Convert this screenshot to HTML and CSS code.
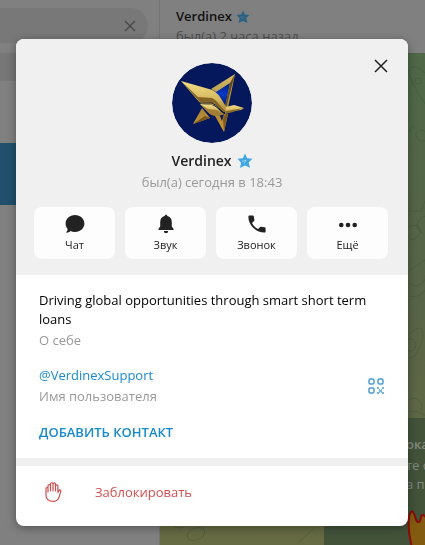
FILE: index.html
```html
<!DOCTYPE html>
<html lang="ru">
<head>
  <meta charset="UTF-8" />
  <meta name="viewport" content="width=device-width, initial-scale=1" />
  <title>Verdinex</title>
  <link rel="stylesheet" href="styles.css">
</head>
<body>

  <div class="app">
    <div class="sidebar">
      <div class="search">
        <svg width="12" height="12" viewBox="0 0 12 12"><path d="M1 1l10 10M11 1L1 11" stroke="#4b4b4b" stroke-width="1.5" /></svg>
      </div>
      <div class="filter"></div>
      <div class="selected-chat"></div>
    </div>
    <div class="chat">
      <div class="chat-header">
        <div class="chat-name">Verdinex
          <svg class="star" width="14" height="14" viewBox="0 0 16 16"><path d="M8 .6l2.1 4.6 5.3.5-3.800 3.700 1.500 5.400L8 12.500l-4.900 2.400L4 9.700.6 5.800l5.300-.6z" fill="#2a6384" /><path d="M5 8.500l4-1-2 3" fill="none" stroke="#5f7680" stroke-width=".8" /></svg>
        </div>
        <div class="chat-status">был(а) 2 часа назад</div>
      </div>
      <div class="wallpaper">
        <svg class="doodles" width="266" height="492" viewBox="0 0 266 492" fill="none" stroke="#3f5539" stroke-opacity=".5">
          <path d="M266 52c-10-14-14-24-17-31-2-6 6-10 11-5l6 5M266 80c-4-5-11-3-10 3 0 4 5 5 10 5M249 79c3-4 2-8 6-4M249 158h12l5-12M249 174c8-5 14 2 10 8s-9 5-10 3M266 163c-10 2-12 14-3 17M249 217c6-2 14-10 16-10l1 8" />
          <circle cx="258" cy="28" r="3" />
          <path d="M249 230c8 6 15 1 17-6M249 243c7 2 13-1 17-7M249 282c3-4 10-10 13-5 3 8-2 16-5 23-2 4-6 5-8 4" />
          <circle cx="250" cy="292" r="6" />
          <path d="M249 347c9-5 15 3 12 10M249 359c7-1 11 0 17 4" />
          <ellipse cx="36" cy="481" rx="9" ry="6" transform="rotate(-20 36 481)" />
          <path d="M13 472c4 5 12 3 14-2M58 468c0 4 6 4 7-1M139 489l14-13" />
        </svg>
        <div class="empty-chat">
          <p class="empty-title">ока</p>
          <p class="empty-text">те с<br>а пр</p>
          <svg class="flame" width="24" height="38" viewBox="0 0 24 38"><path d="M6 40C5 30 1 19 3 8c0-3 2-8 4-6 3 4 2 9 5 10 4 1 1-7 5-7 4 1 6 8 9 15v20z" fill="#835b10" stroke="#8b0b08" stroke-width="2" /></svg>
        </div>
      </div>
    </div>
  </div>

  <div class="overlay">
    <div class="modal" role="dialog" aria-labelledby="name">
      <div class="profile">
        <button class="close" aria-label="Закрыть">
          <svg width="14" height="14" viewBox="0 0 14 14"><path d="M1 1l12 12M13 1L1 13" stroke="#222" stroke-width="1.5" /></svg>
        </button>

        <svg class="avatar" width="80" height="80" viewBox="0 0 80 80">
          <defs>
            <linearGradient id="gold" x1="0" y1="0" x2="0" y2="1">
              <stop offset="0" stop-color="#f3df88" />
              <stop offset=".6" stop-color="#d3b75c" />
              <stop offset="1" stop-color="#a88334" />
            </linearGradient>
            <linearGradient id="frame" gradientUnits="userSpaceOnUse" x1="0" y1="11" x2="0" y2="68">
              <stop offset="0" stop-color="#d6be6c" />
              <stop offset=".6" stop-color="#a58238" />
              <stop offset="1" stop-color="#cf982f" />
            </linearGradient>
            <linearGradient id="blue" x1="0" y1="0" x2="0" y2="1">
              <stop offset="0" stop-color="#041a6a" />
              <stop offset=".5" stop-color="#0338c8" />
              <stop offset="1" stop-color="#041a6a" />
            </linearGradient>
          </defs>
          <circle cx="40" cy="40" r="40" fill="#04185b" />
          <!-- star frame -->
          <path d="M59 18L44 29l9 15z" fill="url(#blue)" />
          <path d="M63 11L39 26l5 3 14-9-5 24 3 1z" fill="url(#frame)" />
          <path d="M63 11l-5 9-5 24 1 1z" fill="#634a1c" />
          <path d="M30 45l-9 16 17-6z" fill="url(#frame)" />
          <path d="M21 61l12-8 5 2z" fill="#76561d" />
          <path d="M43 53h5l2 5 2-7h4l-4 18z" fill="url(#frame)" />
          <path d="M51 56l2-5 3 0-4 18z" fill="#7d5b20" />
          <!-- wing and head -->
          <path d="M9 18l28 8c7 2 10 6 13 11 2 4 4 7 7 9l-5 3-10-7-13-1z" fill="url(#gold)" />
          <path d="M9 18l17 16 14 1c5 2 8 8 13 13l-1 1-10-9-14-1z" fill="#846526" />
          <path d="M28 41l12 1c6 2 8 7 12 9-4 2-9 3-14 0z" fill="url(#gold)" />
          <path d="M28 41l8 5 9 1 7 4c-4 2-9 3-14 0z" fill="#a27f34" />
          <path d="M27 40h13c5 2 8 7 12 10" fill="none" stroke="#171b2c" />
          <path d="M54 44l8-2 10 3-3 2-8 1-8 3z" fill="url(#gold)" />
          <path d="M54 48l18-3-11 4-8 2z" fill="#8d6c2a" />
        </svg>

        <h1 class="name" id="name">Verdinex
          <svg class="star" width="16" height="16" viewBox="0 0 16 16"><path d="M8 .6l2.100 4.600 5.300.5-3.800 3.700 1.500 5.400L8 12.500l-4.900 2.400L4 9.700.6 5.800l5.300-.6z" fill="#40a7e3" /><path d="M5 8.300l4-1-2 3" fill="none" stroke="#a9d8f2" stroke-width=".8" /></svg>
        </h1>
        <p class="status">был(а) сегодня в 18:43</p>

        <div class="actions">
          <button class="action">
            <svg width="20" height="20" viewBox="0 0 20 20"><path d="M10 1c5.300 0 9.400 3.800 9.400 8.500S15.300 18 10 18c-1.700 0-3.200-.4-4.500-1-1 1-2.400 1.700-3.900 1.800-.4 0-.5-.4-.2-.7.8-.9 1.200-2 1.200-3.200C1.300 13.400.6 11.500.6 9.500.6 4.800 4.700 1 10 1z" fill="#222" /></svg>
            Чат
          </button>
          <button class="action">
            <svg width="20" height="20" viewBox="0 0 20 20"><path d="M10 .7c.8 0 1.300.6 1.300 1.400 2.800.6 4.500 2.900 4.500 5.900v4.500l1.700 2.300v1.200h-15v-1.200l1.700-2.300V8c0-3 1.700-5.300 4.500-5.900 0-.8.5-1.400 1.300-1.400zM7.800 17h4.400a2.200 2.200 0 0 1-4.400 0z" fill="#222" /></svg>
            Звук
          </button>
          <button class="action">
            <svg width="20" height="20" viewBox="0 0 20 20"><path d="M2.500 1.500h3.200c.6 0 1 .4 1.100 1l.6 3.300c.1.400 0 .8-.3 1.100L5 9c1.400 2.700 3.500 4.800 6.100 6.100l2.100-2.100c.3-.3.700-.4 1.100-.3l3.300.6c.6.1 1 .5 1 1.100v3c0 .7-.5 1.200-1.200 1.200C8.600 18.300 1.400 11 1.400 2.700c0-.7.4-1.200 1.100-1.200z" fill="#222" /></svg>
            Звонок
          </button>
          <button class="action">
            <svg width="20" height="20" viewBox="0 0 20 20" fill="#222"><circle cx="3.300" cy="11" r="2.300" /><circle cx="10" cy="11" r="2.300" /><circle cx="16.700" cy="11" r="2.300" /></svg>
            Ещё
          </button>
        </div>
      </div>

      <div class="info">
        <p class="value">Driving global opportunities through smart short term loans</p>
        <p class="label">О себе</p>

        <div class="username">
          <div>
            <a class="value" href="#">@VerdinexSupport</a>
            <p class="label">Имя пользователя</p>
          </div>
          <button class="qr" aria-label="QR-код">
            <svg width="16" height="16" viewBox="0 0 16 16" fill="none" stroke="#4a9bd2" stroke-width="1.500"><rect x="1" y="1" width="5" height="5" rx="1.500" /><rect x="10" y="1" width="5" height="5" rx="1.500" /><rect x="1" y="10" width="5" height="5" rx="1.500" /><path d="M9 10h2M14 10h2M11 12h1M13 12h1M12 13h1M9 15h2M14 15h2M11 14h1M13 14h1" /></svg>
          </button>
        </div>

        <a class="add-contact" href="#">ДОБАВИТЬ КОНТАКТ</a>
      </div>

      <button class="block">
        <svg width="20" height="20" viewBox="0 0 20 20" fill="none" stroke="#d14e4e" stroke-width="1.200" stroke-linecap="round" stroke-linejoin="round"><path d="M5 10V3.800a1.250 1.250 0 0 1 2.500 0V9M7.500 9V2a1.250 1.250 0 0 1 2.500 0v7M10 9V2.200a1.250 1.250 0 0 1 2.500 0V9M12.500 9V4a1.200 1.200 0 0 1 2.400 0v6.600l1-2c.6-1.100 2.300-.6 1.900.8l-1.500 5c-.8 3-2.600 5-5.700 5C6 19.400 3 17.500 3 13V6.500A1 1 0 0 1 5 6.500" /></svg>
        Заблокировать
      </button>
    </div>
  </div>

</body>
</html>
```
FILE: styles.css
```css
* {
  box-sizing: border-box;
}

body {
  margin: 0;
  font-family: "Open Sans", "Noto Sans", sans-serif;
  font-size: 13px;
  line-height: 19px;
  color: #000;
}

p, h1 {
  margin: 0;
}

a {
  text-decoration: none;
}

button {
  border: none;
  padding: 0;
  background: none;
  font: inherit;
  cursor: pointer;
}

svg {
  display: block;
}

/* dimmed app behind the modal */
.app {
  display: flex;
  height: 100vh;
  overflow: hidden;
  background: #808080;
}

.sidebar {
  flex: 0 0 160px;
  padding-top: 8px;
  border-right: 1px solid #747474;
}

.search {
  display: flex;
  align-items: center;
  justify-content: flex-end;
  height: 35px;
  margin-right: 11px;
  padding-right: 12px;
  border-radius: 0 18px 18px 0;
  background: #787878;
}

.filter {
  height: 28px;
  margin: 10px 11px 62px 0;
  background: #767676;
}

.selected-chat {
  height: 62px;
  background: #20506e;
}

.chat {
  flex: 1;
  min-width: 0;
  display: flex;
  flex-direction: column;
}

.chat-header {
  height: 53px;
  padding: 7px 16px;
  overflow: hidden;
}

.chat-name {
  display: flex;
  align-items: center;
  gap: 4px;
  font-weight: 600;
  color: #111;
}

.chat-status {
  margin-top: 1px;
  color: #4d4d4d;
}

.wallpaper {
  position: relative;
  flex: 1;
  display: flex;
  align-items: flex-end;
  justify-content: flex-end;
  overflow: hidden;
  background: linear-gradient(#4f6848, #586447 50%, #666b43);
}

.doodles {
  position: absolute;
  top: 0;
  left: 0;
}

.empty-chat {
  width: 101px;
  height: 127px;
  padding: 17px 0 0 82px;
  overflow: hidden;
  white-space: nowrap;
  background: #42533a;
  color: #84897f;
}

.empty-title {
  font-weight: 600;
  margin-bottom: 2px;
}

.flame {
  margin-top: 16px;
}

/* profile modal */
.overlay {
  position: fixed;
  inset: 0;
  padding: 39px 17px 19px 16px;
}

.modal {
  max-width: 392px;
  margin: 0 auto;
  overflow: hidden;
  border-radius: 8px;
  background: #fff;
  box-shadow: 0 2px 10px rgba(0, 0, 0, 0.35);
}

.profile {
  position: relative;
  padding: 24px 18px 16px;
  background: #f0f0f0;
  text-align: center;
}

.close {
  position: absolute;
  top: 20px;
  right: 20px;
}

.avatar {
  margin: 0 auto 8px;
  border-radius: 50%;
}

.name {
  display: flex;
  align-items: center;
  justify-content: center;
  gap: 5px;
  font-size: 14px;
  line-height: 20px;
  font-weight: 600;
  color: #222;
}

.status {
  margin: 2px 0 15px;
  color: #999;
}

.actions {
  display: grid;
  grid-template-columns: repeat(4, 1fr);
  gap: 10px;
  margin-right: 2px;
}

.action {
  display: flex;
  flex-direction: column;
  align-items: center;
  gap: 1px;
  height: 52px;
  padding-top: 7px;
  border-radius: 8px;
  background: #fdfdfd;
  font-size: 11px;
  line-height: 20px;
  color: #222;
}

.info {
  padding: 16px 24px 16px 23px;
}

.value {
  color: #000;
}

.label {
  margin-top: 2px;
  color: #999;
}

.username {
  display: flex;
  align-items: center;
  justify-content: space-between;
  margin: 16px 0 17px;
}

.username .value {
  display: block;
  color: #168acd;
}

.add-contact {
  display: block;
  font-weight: 600;
  color: #168acd;
}

.block {
  display: flex;
  align-items: center;
  gap: 32px;
  width: 100%;
  padding: 16px 27px 24px;
  border-top: 8px solid #f0f0f0;
  color: #d14e4e;
}
```
